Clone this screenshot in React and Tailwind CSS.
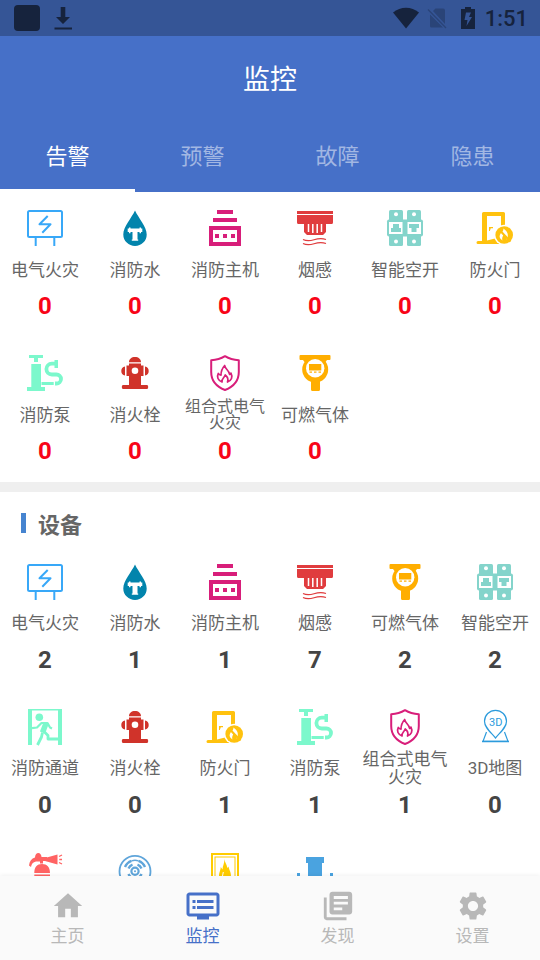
import { useState } from "react";
import { MdHome, MdDvr, MdLibraryBooks, MdSettings } from "react-icons/md";

function Icon({ children }) {
  return (
    <svg viewBox="0 0 36 36" className="h-9 w-9 shrink-0 overflow-visible" fill="none" aria-hidden="true">
      {children}
    </svg>
  );
}

const ElectricIcon = () => (
  <Icon>
    <g stroke="#38a8f8" strokeWidth="2">
      <rect x="1" y="1" width="34" height="26" rx="1.5" />
      <path d="M8.7 27v9M27.3 27v9" />
      <path d="M20.7 6 12.5 14.3H23.5L15.3 22.7" strokeLinejoin="round" />
    </g>
  </Icon>
);

const WaterIcon = () => (
  <Icon>
    <path d="M18 .5C21.5 8 29.7 17 29.7 24.4a11.7 11.6 0 0 1-23.4 0C6.3 17 14.5 8 18 .5Z" fill="#0284ac" />
    <path d="M12 17.5h1.500v1h9v-1H24v1h1.300v3.500H24v1.300h-1.500V22H20.500v7.500h.7v1.300h-6.400v-1.300h.7V22h-2v1.300H12V22h-1.300v-3.500H12Z" fill="#fff" />
  </Icon>
);

const HostIcon = () => (
  <Icon>
    <path
      d="M10 0h16v4H10ZM6 8h24v4H6ZM2 16h32v20H2ZM6 20v12h24V20ZM8 24h4v4H8ZM16 24h4v4h-4ZM24 24h4v4h-4Z"
      fill="#d81e7a"
      fillRule="evenodd"
    />
  </Icon>
);

const SmokeIcon = () => (
  <Icon>
    <path d="M0 1h36v3H0ZM0 5h36v7.500a1.500 1.500 0 0 1-1.500 1.500H29v8l-3 3H10l-3-3v-8H1.500A1.500 1.500 0 0 1 0 12.500Z" fill="#e03c3e" />
    <path d="M11.500 14v8M15.800 14v9M20.200 14v9M24.500 14v8" stroke="#fff" strokeWidth="1.500" />
    <path
      d="M6 29.500c4 2 7 1.500 11 .2s8-1.800 12-.2M6 33.500c4 2 7 1.500 11 .2s8-1.800 12-.2"
      stroke="#e03c3e"
      strokeWidth="1.200"
    />
  </Icon>
);

const BreakerIcon = () => (
  <Icon>
    <g fill="#84d4cb">
      <rect x="2" width="14" height="36" rx="1.500" />
      <rect x="20" width="14" height="36" rx="1.500" />
      <rect y="9.500" width="36" height="17" rx="2" />
    </g>
    <path d="M2 12h13.500v12H2ZM20.500 12H34v12H20.500Z" fill="#fff" />
    <path d="M6 14h6v4h2v4H4v-4h2ZM22 14h10v4h-2.500v4h-5v-4H22Z" fill="#84d4cb" />
    <g fill="#fff">
      <circle cx="9" cy="4.300" r="2" />
      <circle cx="27" cy="4.300" r="2" />
      <circle cx="9" cy="31.500" r="2" />
      <circle cx="27" cy="31.500" r="2" />
    </g>
  </Icon>
);

const DoorIcon = () => (
  <Icon>
    <path d="M6.500 2h20A1.500 1.500 0 0 1 28 3.500V22h-4V6H10v24.500l8-2V34H1a1.500 1.500 0 0 1 0-3h4V3.500A1.500 1.500 0 0 1 6.500 2Z" fill="#ffc20e" />
    <path d="M18 28l5 6h-6Z" fill="#ffc20e" />
    <path d="M12 17h4v1.300h-2.200l-1 2.700H12Z" fill="#ffc20e" />
    <circle cx="27.200" cy="25" r="10.300" fill="#fff" />
    <circle cx="27.200" cy="25" r="8.800" fill="#ffc20e" />
    <path d="M26.500 18.500c4 3 5.500 6 3.500 11.500-.5-3-1.500-4.500-3.500-6-.3 2.500-2 3.500-1 6.500-3.500-2.500-3.500-4.500-1.500-7.500 1.700-1.500 2.500-2.500 2.500-4.500Z" fill="#fff" />
    <path d="M21.500 19l12 12.500" stroke="#ffc20e" strokeWidth="2.200" />
  </Icon>
);

const PumpIcon = () => (
  <Icon>
    <g fill="#7cf8cc">
      <path d="M2 0h14v3h-5v4H7V3H2ZM4.300 9H14v23h4v4H0v-4h4.300ZM14.500 27H26.700v3H14.500ZM27.500 5H31v8h-3.500Z" />
    </g>
    <path
      d="M28 8.700h-3.200a5.400 5.400 0 0 0 0 10.800h4.700a4.500 4.500 0 0 1 0 9H28"
      stroke="#7cf8cc"
      strokeWidth="3.800"
    />
  </Icon>
);

const HydrantIcon = () => (
  <Icon>
    <g fill="#d0332a">
      <path d="M12 7.300C12 4 14.500 2 18 2s6 2 6 5.300ZM12 8.500h12v2h2.500v10.500H24V30H12v-9H9.500V10.500H12ZM5.500 30h25l.8 2-.8 2h-25l-.8-2Z" />
      <path d="M8 11.500v9C5.500 20 4.300 18.500 4.300 16S5.500 12 8 11.500ZM28 11.500v9c2.500-.5 3.700-2 3.700-4.500s-1.200-4-3.700-4.500Z" />
    </g>
    <circle cx="18" cy="15.700" r="3.300" fill="#fff" />
  </Icon>
);

const ShieldIcon = () => (
  <Icon>
    <path
      d="M18 1.200C13.500 4 9 5 4.200 5.200V17C4.200 25.500 9 31.500 18 35c9-3.500 13.800-9.500 13.800-18V5.200C27 5 22.500 4 18 1.200Z"
      stroke="#d81e7a"
      strokeWidth="2"
      strokeLinejoin="round"
    />
    <path
      d="M15 27c-4-1.500-5.500-5-3.700-8.500.9 1.200 1.500 1.500 2.700 1.700 0-4.500 1.200-7 3.700-9.700.3 3.500 4.300 4.500 5 9 .7-.3 1-.8 1.200-1.500 2 4 .7 7.500-3.400 9 1.200-3.500-.3-5.500-2.300-7-.4 2.500-3.700 3.300-3.200 7Z"
      stroke="#d81e7a"
      strokeWidth="1.700"
      strokeLinejoin="round"
    />
  </Icon>
);

const GasIcon = () => (
  <Icon>
    <path d="M3.500 0h29a1 1 0 0 1 1 1v3a1 1 0 0 1-1 1H30l-1.500 2h-21L6 5H3.500a1 1 0 0 1-1-1V1a1 1 0 0 1 1-1ZM14 25h9v9.500a1.500 1.500 0 0 1-1.500 1.500h-6a1.500 1.500 0 0 1-1.500-1.500Z" fill="#ffae00" />
    <circle cx="18.200" cy="14.500" r="13" fill="#ffae00" />
    <circle cx="18.200" cy="13.300" r="9.200" fill="#fff" />
    <path d="M12 9h12.300v6.500H12ZM12.500 16.500H15v1.200h-2.500ZM17 16.500h2.500v1.200H17ZM21.500 16.500H24v1.200h-2.500Z" fill="#ffae00" />
  </Icon>
);

const ExitIcon = () => (
  <Icon>
    <path d="M1 0h34v36h-4V1.500H5V36H1Z" fill="#7cf8cc" />
    <circle cx="12.300" cy="8.300" r="3.800" fill="#7cf8cc" />
    <path d="M5 19.200 10 18.500l4.500-4.500h6l2.500 4.500 2 1" stroke="#7cf8cc" strokeWidth="2.200" strokeLinejoin="round" />
    <path d="M19 14.500 15.500 23.500" stroke="#7cf8cc" strokeWidth="5.500" />
    <path d="M15.500 23.500 14.500 28l-4 8M17 22.500l4 4v3.500h10" stroke="#7cf8cc" strokeWidth="2.800" strokeLinejoin="round" />
  </Icon>
);

const MapIcon = () => (
  <Icon>
    <path
      d="M18.500 29C12.500 22 7.500 18 7.500 12.300a11 11 0 0 1 22 0C29.500 18 24.500 22 18.500 29ZM9.500 23 6 32.300h25L27.500 23"
      stroke="#2c9bdc"
      strokeWidth="1.200"
    />
    <path d="M5 32.500h27" stroke="#2c9bdc" strokeWidth="1.500" />
    <text x="18.700" y="16.500" textAnchor="middle" className="font-['Roboto',sans-serif] text-[11px]" fill="#2c9bdc">
      3D
    </text>
  </Icon>
);

const ExtinguisherIcon = () => (
  <Icon>
    <g fill="#ff6363">
      <path d="M18 4l12.500-3.500v10L18 7ZM8 3.500C8 1 9.500-1 11.300-1s3.200 2 3.200 4H20v4h-4v2.500h-3V7.500H9C6 8 4.500 10 4 13L2 11.500C2.500 7 4.500 4.500 8 3.500ZM7.300 19c0-6 2.700-9 7.700-9s8 3 8 9ZM7.300 20.500H23V36H7.300Z" />
    </g>
    <path d="M32 2.500l3-1.500M32.300 5.500h2.700M32 8.500l3 1.500" stroke="#ff6363" strokeWidth="1.300" />
  </Icon>
);

const BellIcon = () => (
  <Icon>
    <g stroke="#5fa5da">
      <circle cx="18" cy="17.300" r="15.500" strokeWidth="1.800" />
      <circle cx="18" cy="17.300" r="3.600" strokeWidth="2.200" />
      <path
        d="M11.500 14.500a7 7 0 0 1 4-3.800M20.500 10.700a7 7 0 0 1 4 3.800M8 13a11 11 0 0 1 6.500-6.200M21.500 6.800a11 11 0 0 1 6.500 6.200M24.500 20a7 7 0 0 1-4 4M15.500 24a7 7 0 0 1-4-4"
        strokeWidth="2.400"
      />
      <path d="M14.500 6.800a11 11 0 0 1 7 0" strokeWidth="1.400" />
    </g>
    <circle cx="18" cy="17.300" r="1" fill="#5fa5da" />
  </Icon>
);

const FlameFrameIcon = () => (
  <Icon>
    <rect x="5" y="0" width="26" height="35" stroke="#fc0" strokeWidth="2" />
    <rect x="8" y="3" width="20" height="29" stroke="#fc0" strokeWidth="1" />
    <path d="M17.500 5c.3 4 2.500 5 2.800 9l1.200-1.500c.3 3 2.500 5 2.500 9.500 0 5-3 7.500-6 7.500s-6-2.500-6-7.500c0-4 1.500-5 1.800-9l1.700 2.500c.2-4 2-6 2-10.500Z" fill="#fc0" />
    <path d="M15.500 22l.8-4" stroke="#fff" strokeWidth="1" />
  </Icon>
);

const ValveIcon = () => (
  <Icon>
    <path d="M9 3h18v6h-2v27H11V9H9ZM0 19h3v12H0ZM33 19h3v12h-3ZM3 23h30v7H3Z" fill="#4aa3e0" />
  </Icon>
);

const alarms = [
  { label: "电气火灾", icon: ElectricIcon, count: 0 },
  { label: "消防水", icon: WaterIcon, count: 0 },
  { label: "消防主机", icon: HostIcon, count: 0 },
  { label: "烟感", icon: SmokeIcon, count: 0 },
  { label: "智能空开", icon: BreakerIcon, count: 0 },
  { label: "防火门", icon: DoorIcon, count: 0 },
  { label: "消防泵", icon: PumpIcon, count: 0 },
  { label: "消火栓", icon: HydrantIcon, count: 0 },
  { label: "组合式电气火灾", icon: ShieldIcon, count: 0, long: "w-20 text-[16px] leading-4" },
  { label: "可燃气体", icon: GasIcon, count: 0 },
];

const devices = [
  { label: "电气火灾", icon: ElectricIcon, count: 2 },
  { label: "消防水", icon: WaterIcon, count: 1 },
  { label: "消防主机", icon: HostIcon, count: 1 },
  { label: "烟感", icon: SmokeIcon, count: 7 },
  { label: "可燃气体", icon: GasIcon, count: 2 },
  { label: "智能空开", icon: BreakerIcon, count: 2 },
  { label: "消防通道", icon: ExitIcon, count: 0 },
  { label: "消火栓", icon: HydrantIcon, count: 0 },
  { label: "防火门", icon: DoorIcon, count: 1 },
  { label: "消防泵", icon: PumpIcon, count: 1 },
  { label: "组合式电气火灾", icon: ShieldIcon, count: 1, long: "text-[17px] leading-[18px]" },
  { label: "3D地图", icon: MapIcon, count: 0 },
  { icon: ExtinguisherIcon },
  { icon: BellIcon },
  { icon: FlameFrameIcon },
  { icon: ValveIcon },
];

function Grid({ items, labelClass, countClass }) {
  return (
    <div className="grid grid-cols-6">
      {items.map(({ label, icon: Glyph, count, long }, i) => (
        <button key={i} type="button" className="flex h-[145px] flex-col items-center pt-[18px]">
          <Glyph />
          <span className={labelClass}>
            <span className={long || "whitespace-nowrap text-[17px] leading-6"}>{label}</span>
          </span>
          <span className={countClass}>{count}</span>
        </button>
      ))}
    </div>
  );
}

function StatusBar() {
  return (
    <div className="flex h-9 items-center justify-between bg-[#355596] pl-[14px] pr-3 text-[#16233d]">
      <div className="flex items-center gap-3">
        <div className="h-[26px] w-[26px] rounded bg-[#16233d]" />
        <svg viewBox="0 0 22 26" className="h-[26px] w-[22px]" fill="currentColor" aria-hidden="true">
          <path d="M8.700 2h4.600v10H18l-7 7-7-7h4.700ZM2.500 22.500h17.500v2H2.500Z" />
        </svg>
      </div>
      <div className="flex items-center">
        <svg viewBox="0 0 26 22" className="h-[22px] w-[26px]" fill="currentColor" aria-hidden="true">
          <path d="M13 21.500 0 5.500C7.500-.8 18.500-.8 26 5.500Z" />
        </svg>
        <svg viewBox="0 0 20 22" className="ml-2 h-[22px] w-5" aria-hidden="true">
          <path d="M8.500 1.500H16a2 2 0 0 1 2 2v13.500L6 4ZM3 7.500l13 13H4.500A1.500 1.500 0 0 1 3 19Z" fill="#2a4478" />
          <path d="M1 2.500 19 21" stroke="#2a4478" strokeWidth="1.300" />
        </svg>
        <svg viewBox="0 0 14 22" className="ml-[14px] h-[22px] w-[14px]" fill="currentColor" aria-hidden="true">
          <path fillRule="evenodd" d="M4 0h6v2h4v20H0V2h4ZM5 5.500 3.500 13h3L5.500 19 11 10H8l2-4.500Z" />
        </svg>
        <span className="ml-[10px] pt-px text-[22px] font-medium leading-none">1:51</span>
      </div>
    </div>
  );
}

const tabs = ["告警", "预警", "故障", "隐患"];

const navItems = [
  { label: "主页", icon: MdHome },
  { label: "监控", icon: MdDvr },
  { label: "发现", icon: MdLibraryBooks },
  { label: "设置", icon: MdSettings },
];

export default function App() {
  const [tab, setTab] = useState(0);
  const [page, setPage] = useState(1);

  return (
    <div className="flex h-screen flex-col bg-white font-['Roboto','Noto_Sans_CJK_SC',sans-serif] text-[#666]">
      <header className="shrink-0 bg-[#4670c8] text-white">
        <StatusBar />
        <h1 className="flex h-[84px] items-center justify-center pt-1 text-[27px]">监控</h1>
        <div role="tablist" className="grid h-[72px] grid-cols-4">
          {tabs.map((name, i) => (
            <button
              key={name}
              type="button"
              role="tab"
              aria-selected={i === tab}
              onClick={() => setTab(i)}
              className={
                i === tab
                  ? "border-y-3 border-t-transparent border-b-white text-[22px]"
                  : "border-y-3 border-transparent text-[22px] text-white/50"
              }
            >
              {name}
            </button>
          ))}
        </div>
      </header>

      <main className="min-h-0 flex-1 overflow-y-auto [scrollbar-width:none]">
        <section>
          <Grid
            items={alarms}
            labelClass="flex h-11 items-center justify-center pt-1"
            countClass="text-2xl font-bold leading-8 text-[#f80418]"
          />
        </section>
        <section className="border-t-10 border-[#efefef]">
          <h2 className="flex h-[54px] items-center gap-3 px-[21px] pt-[14px] text-[22px] font-bold leading-8">
            <span className="mb-[6px] h-5 w-[5px] bg-[#4684d0]" />
            设备
          </h2>
          <Grid
            items={devices}
            labelClass="flex h-11 items-center justify-center pt-[2px]"
            countClass="text-2xl font-bold leading-8 text-[#444]"
          />
        </section>
      </main>

      <nav className="z-10 grid shrink-0 grid-cols-4 bg-[#fafafa] shadow-[0_-1px_4px_rgba(0,0,0,0.06)]">
        {navItems.map(({ label, icon: NavIcon }, i) => (
          <button
            key={label}
            type="button"
            aria-current={i === page ? "page" : undefined}
            onClick={() => setPage(i)}
            className={
              i === page
                ? "flex flex-col items-center py-3 text-[#4670c8]"
                : "flex flex-col items-center py-3 text-[#b8b8b8]"
            }
          >
            <span className="flex h-9 items-center">
              <NavIcon className={i === page ? "h-9 w-9" : "h-[34px] w-[34px]"} aria-hidden="true" />
            </span>
            <span className="text-[17px] leading-6">{label}</span>
          </button>
        ))}
      </nav>
    </div>
  );
}
